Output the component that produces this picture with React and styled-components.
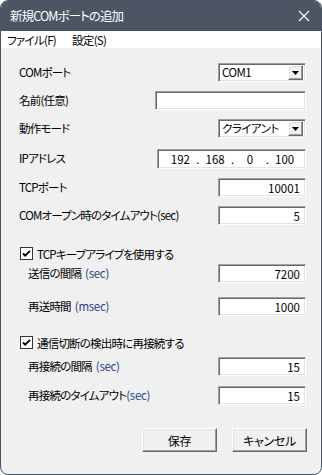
import React from 'react';
import styled, { createGlobalStyle, css } from 'styled-components';

const Global = createGlobalStyle`
  html, body { margin: 0; padding: 0; background: #ffffff; }
  body {
    width: 322px; height: 475px; overflow: hidden;
    font-family: "Noto Sans CJK JP", "Noto Sans", sans-serif;
    font-feature-settings: "palt";
  }
  * { box-sizing: border-box; }
`;

const sunken = css`
  border: 1px solid;
  border-color: #a0a0a0 #ffffff #ffffff #a0a0a0;
  box-shadow: inset 1px 1px 0 #696969, inset -1px -1px 0 #e3e3e3;
  background: #ffffff;
`;

const raised = css`
  border: 1px solid;
  border-color: #ffffff #696969 #696969 #ffffff;
  box-shadow: inset -1px -1px 0 #a0a0a0, inset 1px 1px 0 #e3e3e3;
`;

const Window = styled.div`
  width: 322px;
  height: 475px;
  border: 1px solid #4b5563;
  border-radius: 8px;
  overflow: hidden;
  background: #f0f0f0;
  display: flex;
  flex-direction: column;
`;

const TitleBar = styled.div`
  height: 30px;
  background: #4b5563;
  color: #ffffff;
  display: flex;
  align-items: center;
  justify-content: space-between;
  padding: 0 10px 1px 9px;
  font-size: 12.5px;
  letter-spacing: -0.9px;
`;

const CloseBtn = styled.div`
  width: 12px;
  height: 12px;
  display: flex;
  margin-right: 1px;
`;

const MenuBar = styled.div`
  height: 17px;
  background: #ffffff;
  display: flex;
  align-items: center;
  gap: 16px;
  padding-left: 6px;
  font-size: 11.5px;
  letter-spacing: -0.7px;
  color: #000;
`;

const Body = styled.div`
  flex: 1;
  display: flex;
  flex-direction: column;
  padding: 14px 15px 0 18px;
  font-size: 11.5px;
  letter-spacing: -0.8px;
  color: #000;
`;

const Row = styled.div`
  height: 19px;
  margin-top: ${p => p.$mt || 0}px;
  padding-left: ${p => p.$indent || 0}px;
  display: flex;
  align-items: center;
  justify-content: space-between;
`;

const Label = styled.span`
  white-space: nowrap;
  line-height: 19px;
`;

const Unit = styled.span`
  color: #1f4282;
  letter-spacing: -0.3px;
  margin-left: ${p => (p.$spaced ? 4 : 0)}px;
`;

const TextBox = styled.div`
  ${sunken};
  width: ${p => p.$w || 88}px;
  height: 19px;
  display: flex;
  align-items: center;
  justify-content: flex-end;
  padding-right: 5px;
  letter-spacing: 0;
`;

const Select = styled.div`
  ${sunken};
  width: 88px;
  height: 19px;
  display: flex;
  align-items: center;
  justify-content: space-between;
  padding: 0 2px 0 3px;
`;

const SelectText = styled.span`
  line-height: 15px;
  letter-spacing: -0.5px;
`;

const DropBtn = styled.div`
  ${raised};
  width: 15px;
  height: 15px;
  background: #f0f0f0;
  display: flex;
  align-items: center;
  justify-content: center;
`;

const IpBox = styled.div`
  ${sunken};
  width: 149px;
  height: 20px;
  display: flex;
  align-items: center;
  padding: 0 6px 0 8px;
  letter-spacing: 0;
`;

const IpSeg = styled.span`
  flex: 1;
  text-align: center;
`;

const IpDot = styled.span`
  width: 6px;
  text-align: center;
`;

const CheckRow = styled.label`
  height: 19px;
  margin-top: ${p => p.$mt || 0}px;
  display: flex;
  align-items: center;
  gap: 4px;
  padding-left: 1px;
`;

const CheckBox = styled.span`
  width: 13px;
  height: 13px;
  border: 1px solid #333333;
  background: #ffffff;
  display: flex;
  align-items: center;
  justify-content: center;
`;

const ButtonBar = styled.div`
  margin-top: 23px;
  display: flex;
  justify-content: flex-end;
  gap: 15px;
  margin-right: -1px;
`;

const Button = styled.div`
  ${raised};
  width: 75px;
  height: 24px;
  background: #f0f0f0;
  display: flex;
  align-items: center;
  justify-content: center;
  font-size: 12px;
  letter-spacing: -0.3px;
`;

const Arrow = () => (
  <svg width="7" height="4" viewBox="0 0 7 4"><path d="M0 0h7L3.5 4z" fill="#000" /></svg>
);

const Check = () => (
  <svg width="9" height="9" viewBox="0 0 9 9">
    <path d="M1 4.5l2.2 2.2L8 1.8" fill="none" stroke="#000" strokeWidth="1.8" />
  </svg>
);

const Field = ({ mt, indent, label, children }) => (
  <Row $mt={mt} $indent={indent}>
    <Label>{label}</Label>
    {children}
  </Row>
);

export default function App() {
  return (
    <>
      <Global />
      <Window>
        <TitleBar>
          <span>新規COMポートの追加</span>
          <CloseBtn>
            <svg width="12" height="12" viewBox="0 0 12 12">
              <path d="M1 1l10 10M11 1L1 11" stroke="#fff" strokeWidth="1.1" />
            </svg>
          </CloseBtn>
        </TitleBar>
        <MenuBar>
          <span>ファイル(F)</span>
          <span>設定(S)</span>
        </MenuBar>
        <Body>
          <Field mt={1} label="COMポート">
            <Select><SelectText>COM1</SelectText><DropBtn><Arrow /></DropBtn></Select>
          </Field>
          <Field mt={9} label="名前(任意)">
            <TextBox $w={151} />
          </Field>
          <Field mt={9} label="動作モード">
            <Select><SelectText>クライアント</SelectText><DropBtn><Arrow /></DropBtn></Select>
          </Field>
          <Field mt={11} label="IPアドレス">
            <IpBox>
              <IpSeg>192</IpSeg><IpDot>.</IpDot>
              <IpSeg>168</IpSeg><IpDot>.</IpDot>
              <IpSeg>0</IpSeg><IpDot>.</IpDot>
              <IpSeg>100</IpSeg>
            </IpBox>
          </Field>
          <Field mt={10} label="TCPポート">
            <TextBox>10001</TextBox>
          </Field>
          <Field mt={9} label="COMオープン時のタイムアウト(sec)">
            <TextBox>5</TextBox>
          </Field>
          <CheckRow $mt={19}>
            <CheckBox><Check /></CheckBox>
            <span>TCPキープアライブを使用する</span>
          </CheckRow>
          <Field mt={1} indent={9} label={<>送信の間隔<Unit $spaced>(sec)</Unit></>}>
            <TextBox>7200</TextBox>
          </Field>
          <Field mt={14} indent={9} label={<>再送時間<Unit $spaced>(msec)</Unit></>}>
            <TextBox>1000</TextBox>
          </Field>
          <CheckRow $mt={17}>
            <CheckBox><Check /></CheckBox>
            <span>通信切断の検出時に再接続する</span>
          </CheckRow>
          <Field mt={5} indent={9} label={<>再接続の間隔<Unit $spaced>(sec)</Unit></>}>
            <TextBox>15</TextBox>
          </Field>
          <Field mt={10} indent={9} label={<>再接続のタイムアウト<Unit>(sec)</Unit></>}>
            <TextBox>15</TextBox>
          </Field>
          <ButtonBar>
            <Button>保存</Button>
            <Button>キャンセル</Button>
          </ButtonBar>
        </Body>
      </Window>
    </>
  );
}
